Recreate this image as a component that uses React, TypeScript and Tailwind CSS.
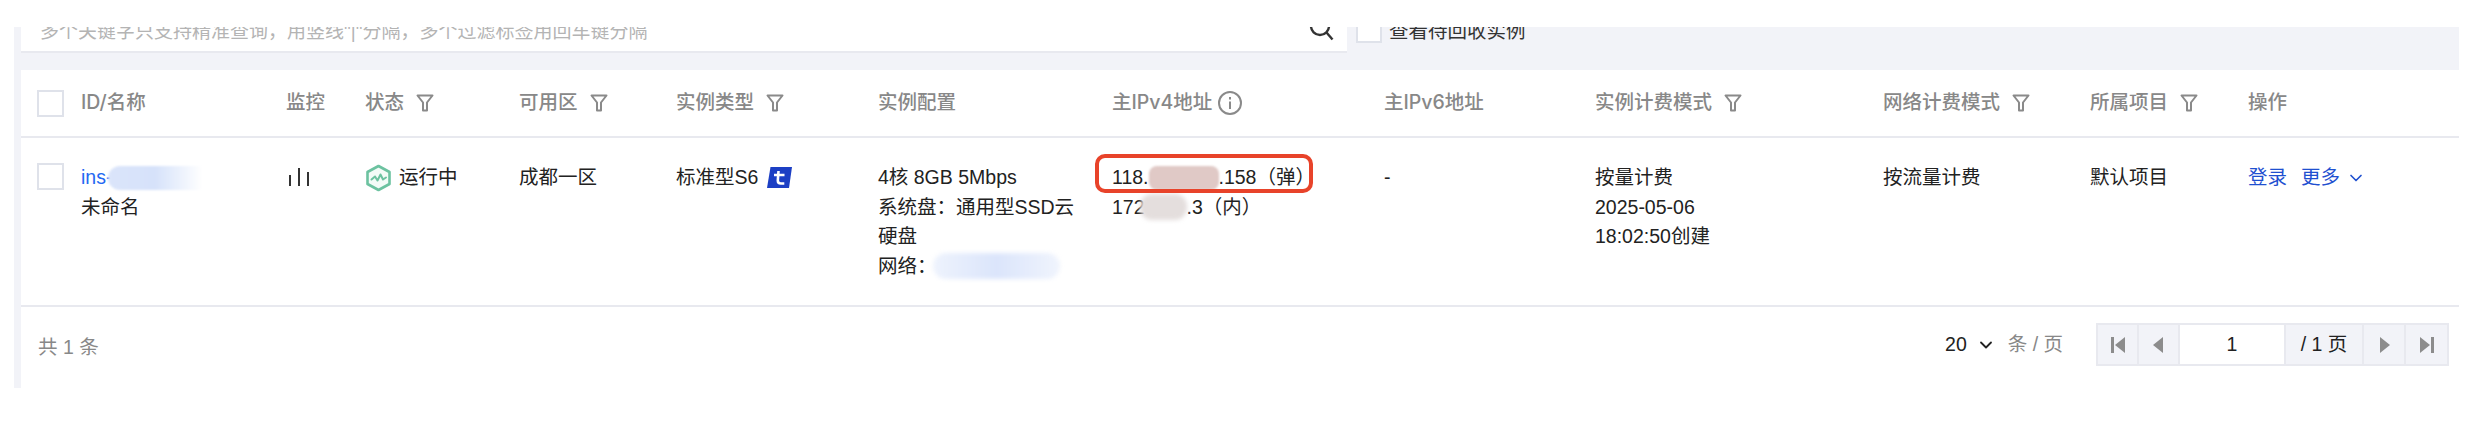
import { ChevronDown } from 'lucide-react';

const gridCols = 'grid grid-cols-[60px_205px_79px_154px_157px_202px_234px_272px_211px_288px_207px_158px_211px]';
const headText = "font-['Inter','Noto_Sans_CJK_SC',sans-serif] text-[19.5px] font-medium text-[#888]";

function Checkbox() {
  return <span className="block h-[27px] w-[27px] border-2 border-[#dfe2ea] bg-white" />;
}

function FilterIcon() {
  return (
    <svg width="18" height="18" viewBox="0 0 18 18" fill="none" stroke="#8a8a8a" strokeWidth="2" className="ml-[12px] shrink-0">
      <path d="M1.5 1.5h15l-5.5 7v8h-4v-8z" strokeLinejoin="round" />
    </svg>
  );
}

function HeadCell({ label, filter }: { label: string; filter?: boolean }) {
  return (
    <div className={`flex items-center ${headText}`}>
      {label}
      {filter && <FilterIcon />}
    </div>
  );
}

function StatusIcon() {
  return (
    <svg width="27" height="28" viewBox="0 0 27 28" fill="none" className="mr-[7px] shrink-0">
      <path d="M13.5 2 24.5 8v12l-11 6-11-6V8z" stroke="#6cc2a0" strokeWidth="2.6" strokeLinejoin="round" fill="#f3fbf7" />
      <path d="M6.5 15.5 10 12.5l2.5 4 3-6 2.5 5 3-2" stroke="#6cc2a0" strokeWidth="2" strokeLinejoin="round" strokeLinecap="round" />
    </svg>
  );
}

function MonitorIcon() {
  return (
    <svg width="22" height="20" viewBox="0 0 22 20" fill="#333" className="ml-[2px] mt-[4px]">
      <rect x="1" y="8" width="2" height="11" />
      <rect x="10" y="1" width="2" height="18" />
      <rect x="19" y="5" width="2" height="14" />
    </svg>
  );
}

function TBadge() {
  return (
    <svg width="25" height="21" viewBox="0 0 25 21" className="ml-[9px] shrink-0">
      <path d="M3.5 0H25l-3 21H0z" fill="#1c3fc4" />
      <path d="M11.5 4 10.8 13.5q0 3 3 3h3.5M7 8h10.5" stroke="#fff" strokeWidth="2.6" fill="none" />
    </svg>
  );
}

function PagerButton({ d, className }: { d: string; className: string }) {
  return (
    <div className={`flex h-full items-center justify-center border-r-2 border-[#e8e9ef] ${className}`}>
      <svg width="16" height="18" viewBox="0 0 16 18" fill="#8c8c8c">
        <path d={d} />
      </svg>
    </div>
  );
}

export default function App() {
  return (
    <div className="h-[434px] w-[2487px] overflow-hidden bg-white pl-[14px] pt-[27px] font-['Liberation_Sans','Noto_Sans_CJK_SC',sans-serif] text-[19.5px] leading-[29.5px] text-[#222]">
      <div className="w-[2445px] border-l-[7px] border-[#f2f3f8] bg-[#f2f3f8]">
        {/* search row, cut off by the top of the crop */}
        <div className="flex h-[26px] overflow-hidden">
          <div className="flex w-[1326px] items-start justify-between border-b-2 border-[#e8e9ef] bg-white pl-[19px] pr-[12px]">
            <span className="-mt-[10px] text-[19px] text-[#b4b4b4]">多个关键字只支持精准查询，用竖线"|"分隔，多个过滤标签用回车键分隔</span>
            <svg width="26" height="24" viewBox="0 0 26 24" fill="none" stroke="#333" strokeWidth="2.4" className="-mt-[10px]">
              <circle cx="11" cy="9" r="9" />
              <path d="m17.5 15.5 6 7" />
            </svg>
          </div>
          <div className="ml-[9px] flex items-start">
            <span className="-mt-[10px] block h-[26px] w-[26px] border-2 border-[#dfe2ea] bg-white" />
            <span className="-mt-[10px] ml-[7px] text-[#333]">查看待回收实例</span>
          </div>
        </div>

        <div className="mt-[17px] bg-white">
          <div className={`${gridCols} h-[68px] items-center border-b-2 border-[#e8e9ef]`}>
            <div className="pl-[16px]"><Checkbox /></div>
            <HeadCell label="ID/名称" />
            <HeadCell label="监控" />
            <HeadCell label="状态" filter />
            <HeadCell label="可用区" filter />
            <HeadCell label="实例类型" filter />
            <HeadCell label="实例配置" />
            <div className={`flex items-center ${headText}`}>
              主IPv4地址
              <svg width="24" height="24" viewBox="0 0 24 24" fill="none" stroke="#8a8a8a" strokeWidth="2" className="ml-[6px]">
                <circle cx="12" cy="12" r="11" />
                <path d="M12 10.5V18M12 6v2.4" />
              </svg>
            </div>
            <HeadCell label="主IPv6地址" />
            <HeadCell label="实例计费模式" filter />
            <HeadCell label="网络计费模式" filter />
            <HeadCell label="所属项目" filter />
            <HeadCell label="操作" />
          </div>

          <div className={`${gridCols} h-[169px] items-start border-b-2 border-[#e8e9ef] pt-[25px]`}>
            <div className="pl-[16px]"><Checkbox /></div>
            <div>
              <div className="flex items-center text-[#2468f2]">
                ins-
                <span className="-ml-[4px] h-[24px] w-[94px] rounded-l-xl bg-gradient-to-r from-[#dbe5fa] via-[#d6e2fa] to-white blur-[1px]" />
              </div>
              <div>未命名</div>
            </div>
            <div><MonitorIcon /></div>
            <div className="flex items-center"><StatusIcon />运行中</div>
            <div>成都一区</div>
            <div className="flex items-center">标准型S6<TBadge /></div>
            <div>
              <div>4核 8GB 5Mbps</div>
              <div className="w-[205px]">系统盘：通用型SSD云硬盘</div>
              <div className="flex items-center">
                网络：
                <span className="-ml-[4px] h-[26px] w-[127px] rounded-full bg-gradient-to-r from-[#eef3fd] via-[#dbe5fb] to-[#f0f4fd] blur-[2px]" />
              </div>
            </div>
            <div className="relative">
              <div className="flex items-center">
                118.
                <span className="h-[24px] w-[70px] rounded-lg bg-[#e0c9c6] blur-[1px]" />
                .158（弹）
              </div>
              <div className="flex items-center">
                172
                <span className="-ml-[5px] h-[26px] w-[47px] rounded-xl bg-[#e4dedd] blur-[2px]" />
                .3（内）
              </div>
              <span className="absolute -left-[17px] -top-[9px] h-[39px] w-[218px] rounded-[10px] border-4 border-[#e8432a]" />
            </div>
            <div>-</div>
            <div>
              <div>按量计费</div>
              <div>2025-05-06</div>
              <div>18:02:50创建</div>
            </div>
            <div>按流量计费</div>
            <div>默认项目</div>
            <div className="flex items-center text-[#1f50d0]">
              登录
              <span className="ml-[14px]">更多</span>
              <ChevronDown size={20} strokeWidth={2} className="ml-[6px]" />
            </div>
          </div>

          <div className="flex h-[81px] items-center justify-between pl-[17px] pr-[10px]">
            <span className="text-[#888]">共 1 条</span>
            <div className="-mt-[6px] flex items-center">
              <span>20</span>
              <ChevronDown size={20} strokeWidth={2.2} className="ml-[9px] text-[#222]" />
              <span className="ml-[12px] text-[#888]">条 / 页</span>
              <div className="ml-[33px] flex h-[43px] w-[353px] border-2 border-[#e8e9ef] bg-[#f2f3f8]">
                <PagerButton d="M1 1h3v16H1zM15 1v16L5 9z" className="w-[41px]" />
                <PagerButton d="M12 1v16L2 9z" className="w-[41px]" />
                <div className="flex w-[106px] items-center justify-center border-r-2 border-[#e8e9ef] bg-white">1</div>
                <div className="flex w-[78px] items-center justify-center border-r-2 border-[#e8e9ef]">/ 1 页</div>
                <PagerButton d="M4 1v16L14 9z" className="w-[42px]" />
                <div className="flex flex-1 items-center justify-center">
                  <svg width="16" height="18" viewBox="0 0 16 18" fill="#8c8c8c">
                    <path d="M1 1v16L11 9zM12 1h3v16h-3z" />
                  </svg>
                </div>
              </div>
            </div>
          </div>
        </div>
      </div>
    </div>
  );
}
